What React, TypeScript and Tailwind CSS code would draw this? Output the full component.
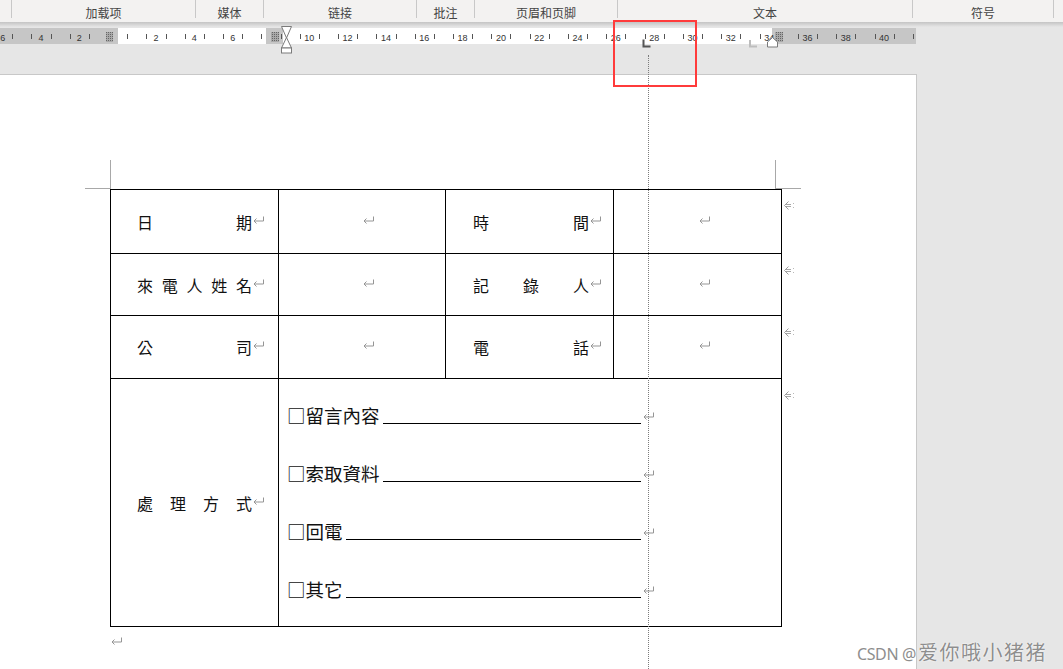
import React from 'react'

const tabs = [
  { label: '', w: 'w-[11px]' },
  { label: '加载项', w: 'w-[183px]' },
  { label: '媒体', w: 'w-[67px]' },
  { label: '链接', w: 'w-[152px]' },
  { label: '批注', w: 'w-[57px]' },
  { label: '页眉和页脚', w: 'w-[142px]' },
  { label: '文本', w: 'w-[294px]' },
  { label: '符号', w: 'w-[140px]' },
]

// ruler scale: 0 at x=117.7, one unit = 19.16px
const O = 117.7
const U = 19.16
const rx = (n: number) => O + n * U

function Ruler() {
  const ticks: number[] = []
  for (let n = -6; n <= 42; n += 2) {
    ticks.push(Math.round(rx(n) - 9.58), Math.round(rx(n) + 9.58))
  }
  const nums: number[] = []
  for (let n = -6; n <= 40; n += 2) if (n !== 0 && n !== 8) nums.push(n)

  return (
    <svg width={1063} height={52} className="block shrink-0">
      <defs>
        <linearGradient id="sh" x1="0" y1="0" x2="0" y2="1">
          <stop offset="0" stopColor="#c4c4c4" />
          <stop offset="1" stopColor="#e6e6e6" />
        </linearGradient>
        <pattern id="hatch" width="2" height="2" patternUnits="userSpaceOnUse">
          <rect width="2" height="2" fill="#a9a9a9" />
          <rect width="1" height="1" fill="#666" />
        </pattern>
      </defs>
      <rect x={0} y={0} width={1063} height={5} fill="url(#sh)" />

      {/* ruler band */}
      <rect x={0} y={6} width={118} height={16} fill="#c6c6c6" />
      <rect x={118} y={6} width={148} height={16} fill="#fff" />
      <rect x={266} y={6} width={17} height={16} fill="#c6c6c6" />
      <rect x={283} y={6} width={489} height={16} fill="#fff" />
      <rect x={772} y={6} width={144} height={16} fill="#c6c6c6" />

      {ticks
        .filter((t) => t >= 0 && t < 915)
        .map((t) => (
          <line key={t} x1={t + 0.5} x2={t + 0.5} y1={12} y2={17} stroke="#555" strokeWidth={1} />
        ))}
      {nums.map((n) => (
        <text
          key={n}
          x={rx(n)}
          y={18.5}
          textAnchor="middle"
          fontSize={9}
          fontFamily="'Liberation Sans', Arial, sans-serif"
          fill="#333"
        >
          {Math.abs(n)}
        </text>
      ))}

      {/* column markers */}
      <rect x={106} y={10} width={7} height={10} fill="url(#hatch)" />
      <rect x={271} y={10} width={8} height={10} fill="url(#hatch)" />
      <rect x={775} y={10} width={8} height={10} fill="url(#hatch)" />

      {/* left indent hourglass */}
      <g fill="#fff" stroke="#7a7a7a" strokeWidth={1}>
        <path d="M281.5 4.5h10l-5 11.5z" />
        <path d="M286.5 15.5l5 10.5h-10z" />
        <rect x={281.5} y={26} width={10} height={5} />
      </g>

      {/* right indent */}
      <path d="M772.5 15.5l5 4.5v5h-10v-5z" fill="#fff" stroke="#7a7a7a" />

      {/* tab stops */}
      <path d="M750 18v6.5h7" fill="none" stroke="#bdbdbd" strokeWidth={2} />
      <path d="M643.5 17.5v7h7" fill="none" stroke="#555" strokeWidth={2} />
    </svg>
  )
}

function Para({ className = '' }: { className?: string }) {
  return (
    <svg width="13" height="10" viewBox="0 0 13 10" className={'shrink-0 ' + className}>
      <path d="M11.5 1.5v4.5H2" fill="none" stroke="#959595" />
      <path d="M4.5 3.5 2 6l2.5 2.5" fill="none" stroke="#959595" />
    </svg>
  )
}

function RowEnd() {
  return (
    <svg width="13" height="11" viewBox="0 0 13 11" className="shrink-0 ml-[1px] mt-[11px]">
      <path d="M5.5 1.5 1.5 5.5l4 4" fill="none" stroke="#9a9a9a" />
      <path d="M3 4.5h5M3 6.5h5" fill="none" stroke="#a8a8a8" />
      <path d="M10 3.5h1M10 7.5h1" fill="none" stroke="#b8b8b8" />
    </svg>
  )
}

function Label({ chars, w }: { chars: string[]; w: string }) {
  return (
    <>
      <div className={'flex justify-between ' + w}>
        {chars.map((c, i) => (
          <span key={i}>{c}</span>
        ))}
      </div>
      <Para className="mb-[4px]" />
    </>
  )
}

const rows = [
  { a: ['日', '期'], b: ['時', '間'], h: 'h-[65px] border-t' },
  { a: ['來', '電', '人', '姓', '名'], b: ['記', '錄', '人'], h: 'h-[62px]' },
  { a: ['公', '司'], b: ['電', '話'], h: 'h-[63px]' },
]

const lines = ['□留言內容', '□索取資料', '□回電', '□其它']

export default function App() {
  return (
    <div className="relative w-[1063px] h-[669px] overflow-hidden bg-[#e6e6e6] flex flex-col font-['Noto_Sans_CJK_SC',sans-serif]">
      {/* ribbon group labels */}
      <div className="h-[22px] shrink-0 bg-[#f3f2f1] flex text-[12px] text-[#444]">
        {tabs.map((t, i) => (
          <React.Fragment key={i}>
            <div className={'h-full flex items-center justify-center pt-[3px] ' + t.w}>{t.label}</div>
            <div className="w-px h-[18px] bg-[#c8c8c8]" />
          </React.Fragment>
        ))}
      </div>

      <Ruler />

      <div className="flex flex-1 min-h-0">
        <div className="w-[917px] shrink-0 bg-white border-t border-r border-[#c8c8c8] pt-[85px] font-['Noto_Sans_CJK_TC',sans-serif] text-[16px] text-[#111]">
          {/* crop marks */}
          <div className="flex h-[29px]">
            <div className="ml-[85px] w-[26px] h-full border-r border-b border-[#a8a8a8]" />
            <div className="w-[664px]" />
            <div className="w-[26px] h-full border-l border-b border-[#a8a8a8]" />
          </div>

          {/* table */}
          <div className="ml-[110px]">
            {rows.map((r, i) => (
              <div key={i} className="flex">
                <div className={'w-[169px] border-l border-r border-b border-black flex items-center pl-[26px] ' + r.h}>
                  <Label chars={r.a} w="w-[115px]" />
                </div>
                <div className={'w-[167px] border-r border-b border-black flex items-center justify-center pl-[13px] ' + r.h}>
                  <Para className="mb-[4px]" />
                </div>
                <div className={'w-[168px] border-r border-b border-black flex items-center pl-[27px] ' + r.h}>
                  <Label chars={r.b} w="w-[116px]" />
                </div>
                <div className={'w-[168px] border-r border-b border-black flex items-center justify-center pl-[13px] ' + r.h}>
                  <Para className="mb-[4px]" />
                </div>
                <RowEnd />
              </div>
            ))}
            <div className="flex">
              <div className="w-[169px] h-[248px] border-l border-r border-b border-black flex items-center pl-[26px]">
                <Label chars={['處', '理', '方', '式']} w="w-[115px]" />
              </div>
              <div className="w-[503px] h-[248px] border-r border-b border-black flex flex-col pt-[26px] gap-[38px] pl-[8px]">
                {lines.map((l) => (
                  <div key={l} className="flex h-[20px] items-start">
                    <div className="flex w-[354px] h-full">
                      <span className="text-[18.5px] leading-[20px] whitespace-nowrap">{l}</span>
                      <span className="flex-1 ml-[3px] h-[19px] border-b border-black" />
                    </div>
                    <Para className="mt-[6px] ml-[1px]" />
                  </div>
                ))}
              </div>
              <RowEnd />
            </div>
          </div>

          <Para className="ml-[110px] mt-[9px]" />
        </div>
        <div className="flex-1" />
      </div>

      {/* annotation overlays */}
      <div className="absolute left-[648px] top-[55px] bottom-0 border-l border-dotted border-[#7c7c7c]" />
      <div className="absolute left-[613px] top-[20px] w-[84px] h-[67px] border-2 border-[#ff3b3b]" />

      {/* watermark */}
      <div className="absolute left-[857px] top-[637px] flex items-baseline text-[#8e8e8e] [text-shadow:0_0_2px_#fff,0_0_1px_#fff]">
        <span className="font-['Noto_Sans',sans-serif] text-[16px] tracking-[-0.4px]">CSDN @</span>
        <span className="text-[20px] tracking-[1.5px] ml-[2px]">爱你哦小猪猪</span>
      </div>
    </div>
  )
}
